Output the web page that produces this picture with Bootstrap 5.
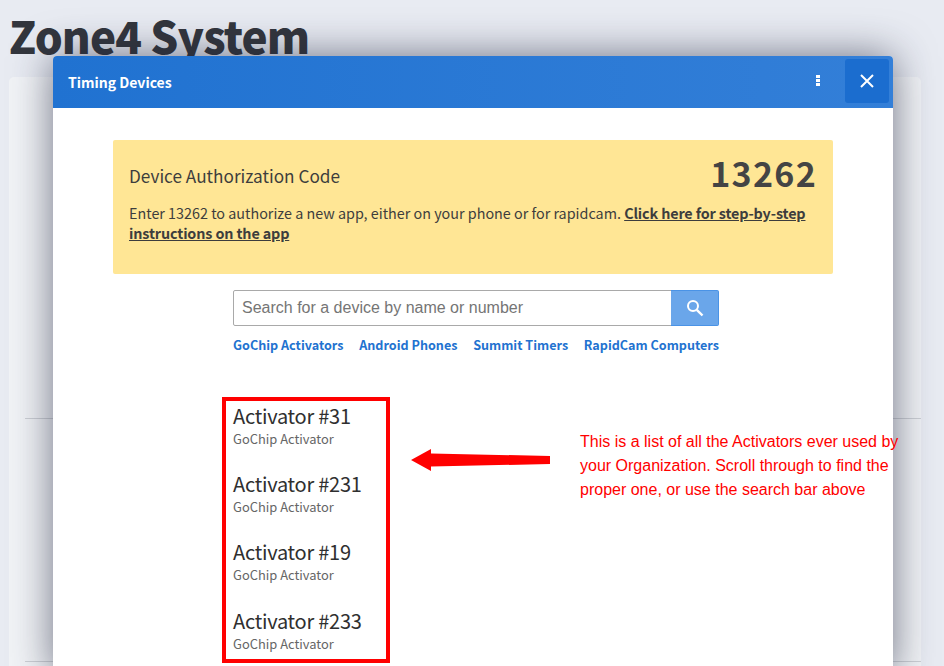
<!DOCTYPE html>
<html lang="en"><head><meta charset="utf-8"><title>Timing Devices</title>
<link href="https://cdn.jsdelivr.net/npm/bootstrap@5.3.0/dist/css/bootstrap.min.css" rel="stylesheet">
<style>
html,body{height:666px;overflow:hidden}
body{font-family:"Noto Sans CJK JP","Noto Sans",sans-serif;background:#e8ebf2;color:#343a40;position:relative}
.backdrop{height:666px;padding:0 23px 0 9px;overflow:hidden}
.sys-title{font-size:44px;font-weight:900;letter-spacing:-.9px;line-height:48px;margin:0;padding-top:11px;height:77px;color:#33363d;position:relative;z-index:2}
.bg-panel{height:700px;background:#f1f3f6;border-radius:5px}
.bg-rule{border-top:1px solid #cdd0d5;margin:0 0 242px 16px}
.bg-rules{padding-top:341px}
.dialog{position:absolute;left:53px;top:56px;width:840px;height:620px;background:#fff;border-radius:4px 4px 0 0;box-shadow:0 0 40px rgba(30,35,60,.62);z-index:3}
.dlg-head{height:52px;background:linear-gradient(90deg,#2072d1,#337fd8);border-radius:4px 4px 0 0;padding-left:15px;color:#fff}
.dlg-title{font-size:14px;font-weight:700;line-height:52px}
.dots{width:4px;margin:19px 25px 0 0;gap:1px}
.dots i{display:block;width:4px;height:3px;background:#fff}
.close-box{width:44px;height:44px;background:#1b6dcf;border:0;border-radius:3px;margin:3px 4px 0 0}
.auth-box{margin:32px 60px 0;height:134px;background:#ffe695;border-radius:2px;padding:16px;color:#3d3d3d}
.auth-label{font-size:17.2px;line-height:40px}
.auth-code{font-weight:700;font-size:34px;line-height:34px;letter-spacing:1.3px;color:#444;height:40px}
.auth-text{font-size:14.35px;line-height:20px;margin:7px 0 0}
.auth-text a{color:#3d3d3d;font-weight:700;letter-spacing:-.13px}
.search-wrap{width:486px;margin:16px auto 0 180px}
.search-in{height:36px;font-family:"Liberation Sans",sans-serif;font-size:16px;border:1px solid #a9a9a9;border-radius:2px 0 0 2px;padding:0 8px;box-shadow:none}
.search-in::placeholder{color:#757575;opacity:1}
.search-btn{width:48px;height:36px;background:#6aa6ea;border:1px solid #4a93e6;border-left:0;border-radius:0 2px 2px 0;padding:0}
.quick{font-size:12.6px;font-weight:700;line-height:20px;margin-top:9px;white-space:nowrap}
.quick a{color:#2272d0;text-decoration:none}
.dev-box{position:absolute;left:169px;top:341px;width:168px;height:266px;border:4px solid #f00;padding:0 7px}
.dev-item{height:68.2px}
.dev-name{font-size:20px;letter-spacing:-.25px;line-height:29px;color:#2f2f2f}
.dev-sub{font-size:12.9px;line-height:17px;color:#666}
.note{position:absolute;left:527px;top:374px;width:340px;font-family:"Liberation Sans",sans-serif;font-size:16px;line-height:24px;color:#f00}
.arrow{position:absolute;left:358px;top:389px}
</style></head><body>
<div class="backdrop">
<h1 class="sys-title">Zone4 System</h1>
<div class="bg-panel"><div class="bg-rules"><div class="bg-rule"></div><div class="bg-rule"></div></div></div>
</div>
<div class="dialog">
 <div class="dlg-head d-flex align-items-start">
  <div class="dlg-title flex-grow-1">Timing Devices</div>
  <div class="dots d-flex flex-column"><i></i><i></i><i></i></div>
  <button class="close-box d-flex align-items-center justify-content-center" aria-label="Close"><svg width="14" height="14" viewBox="0 0 14 14"><path d="M1 1L13 13M13 1L1 13" stroke="#fff" stroke-width="2" fill="none"/></svg></button>
 </div>
 <div class="auth-box">
  <div class="d-flex justify-content-between"><div class="auth-label">Device Authorization Code</div><div class="auth-code">13262</div></div>
  <p class="auth-text">Enter 13262 to authorize a new app, either on your phone or for rapidcam. <a href="#">Click here for step-by-step instructions on the app</a></p>
 </div>
 <div class="search-wrap">
  <div class="input-group"><input class="form-control search-in" placeholder="Search for a device by name or number"><button class="btn search-btn d-flex align-items-center justify-content-center" aria-label="Search"><svg width="18" height="18" viewBox="0 0 18 18"><circle cx="7" cy="7" r="5" stroke="#fff" stroke-width="2" fill="none"/><path d="M10.8 10.8L16.5 16.5" stroke="#fff" stroke-width="2.4"/></svg></button></div>
  <div class="quick d-flex justify-content-between"><a href="#">GoChip Activators</a><a href="#">Android Phones</a><a href="#">Summit Timers</a><a href="#">RapidCam Computers</a></div>
 </div>
 <div class="dev-box">
  <div class="dev-item"><div class="dev-name">Activator #31</div><div class="dev-sub">GoChip Activator</div></div>
  <div class="dev-item"><div class="dev-name">Activator #231</div><div class="dev-sub">GoChip Activator</div></div>
  <div class="dev-item"><div class="dev-name">Activator #19</div><div class="dev-sub">GoChip Activator</div></div>
  <div class="dev-item"><div class="dev-name">Activator #233</div><div class="dev-sub">GoChip Activator</div></div>
 </div>
 <svg class="arrow" width="142" height="30" viewBox="0 0 142 30"><path d="M0 15L20 4V8.5L139 11V19L20 21.5V26Z" fill="#f00"/></svg>
 <div class="note">This is a list of all the Activators ever used by your Organization. Scroll through to find the proper one, or use the search bar above</div>
</div>
<script src="https://cdn.jsdelivr.net/npm/bootstrap@5.3.0/dist/js/bootstrap.bundle.min.js"></script>
</body></html>
